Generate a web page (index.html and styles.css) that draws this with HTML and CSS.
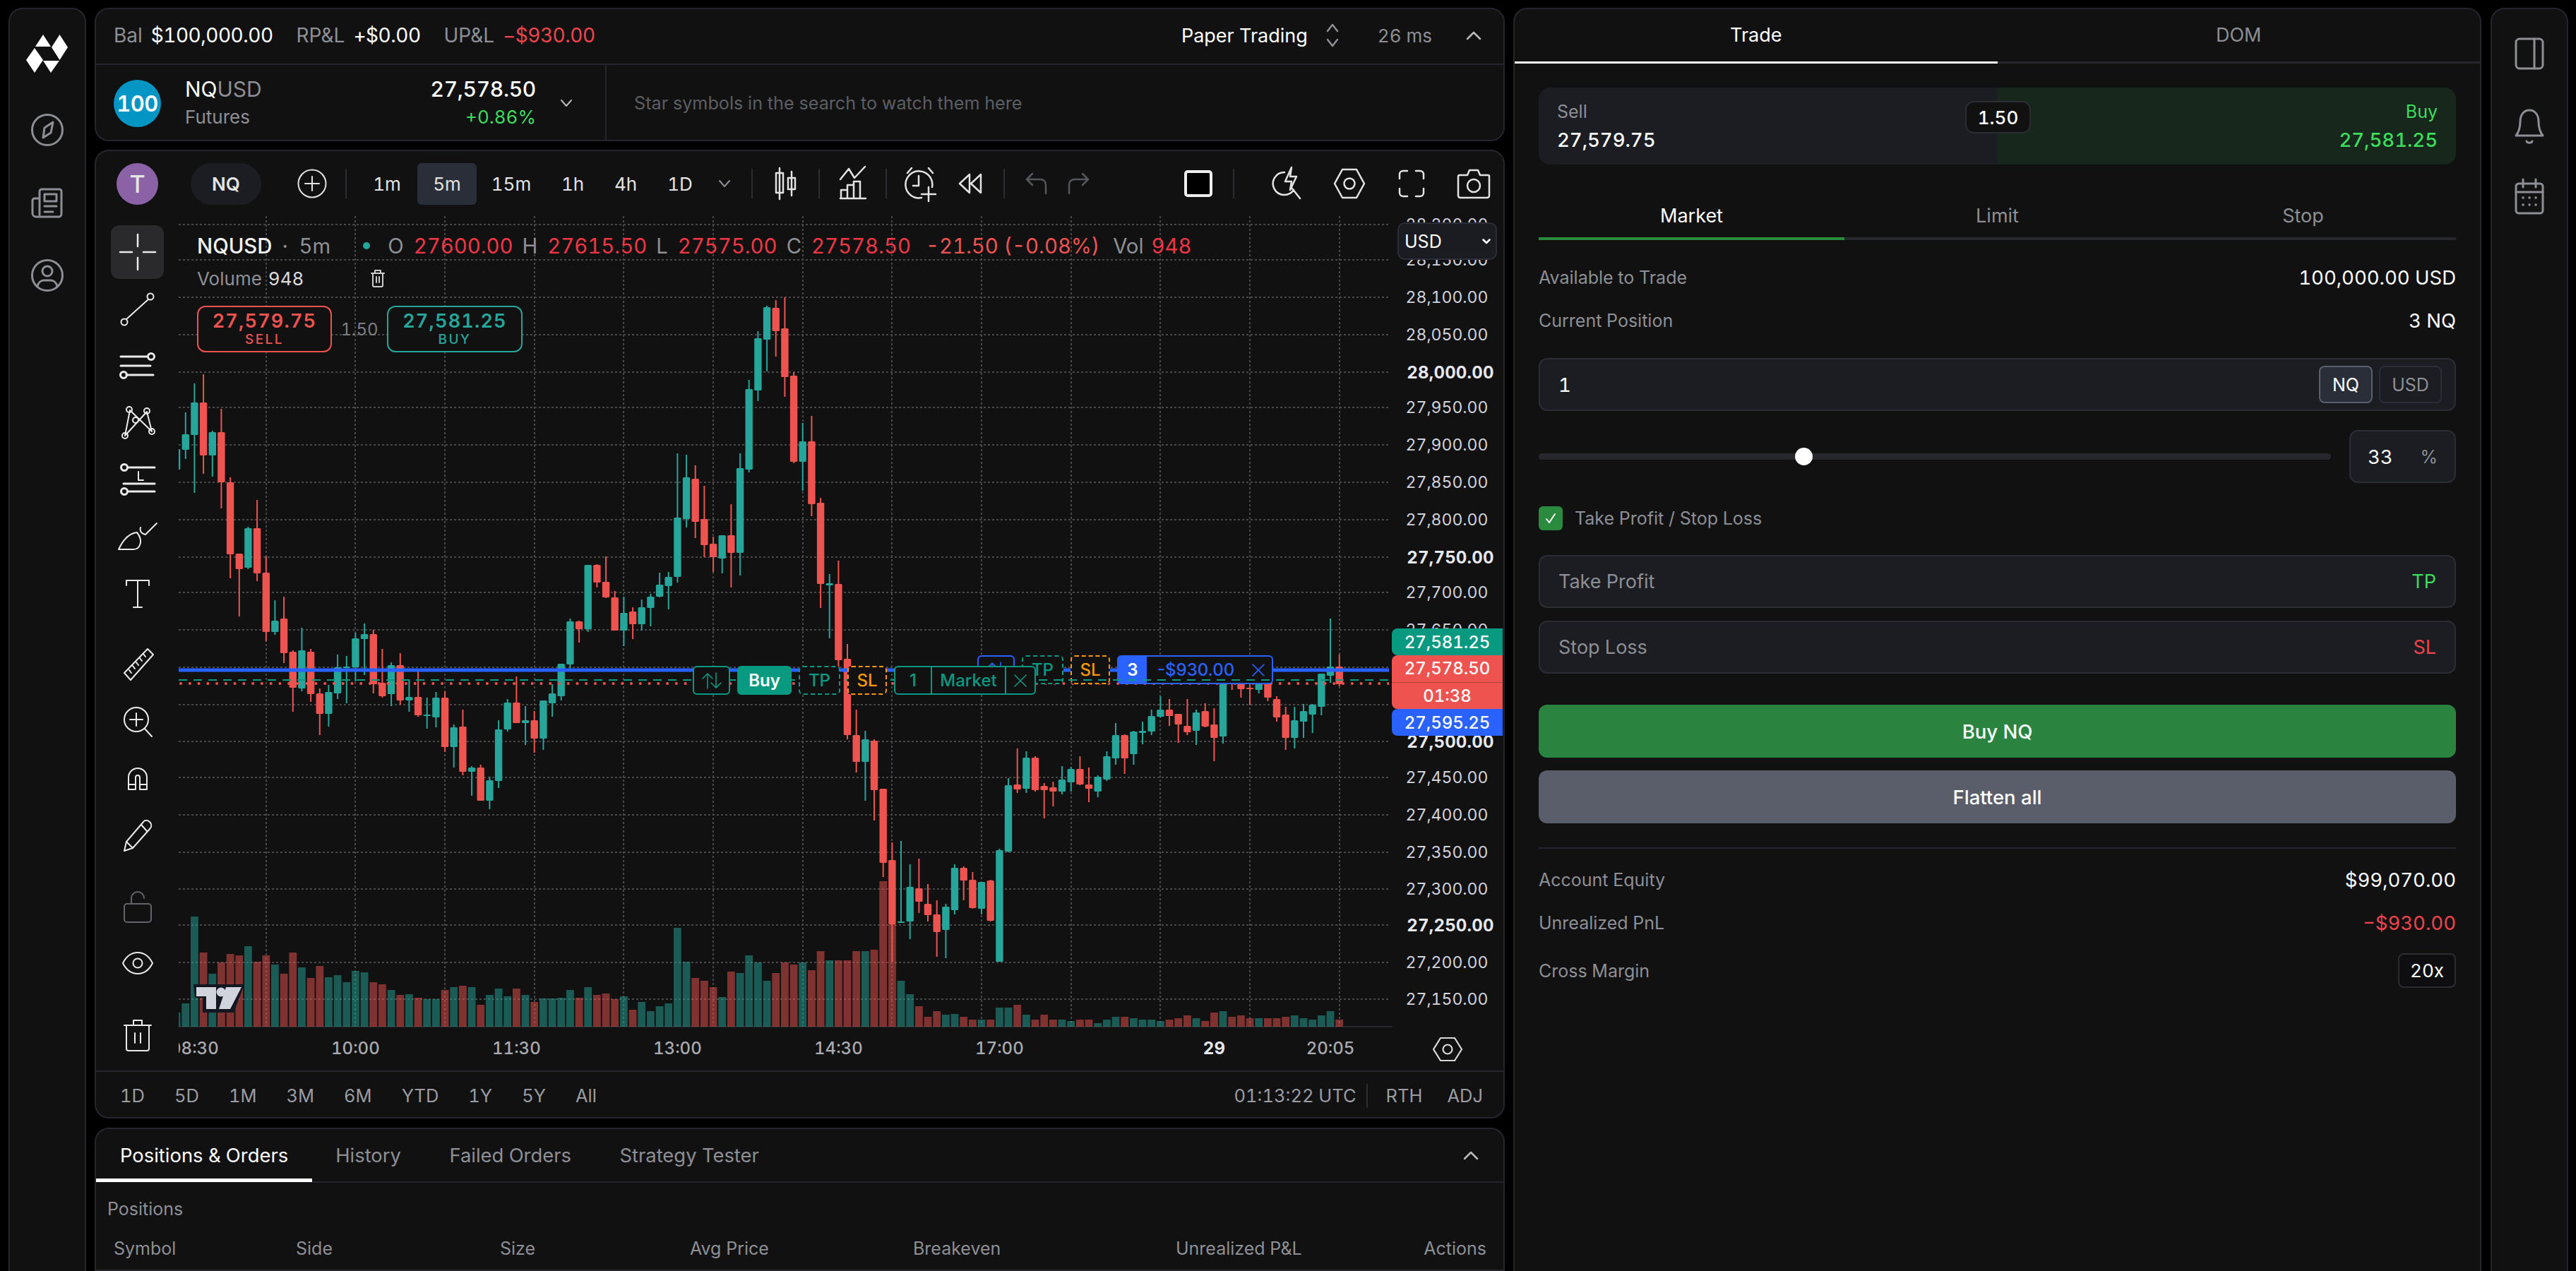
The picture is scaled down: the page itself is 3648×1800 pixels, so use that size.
FILE: index.html
```html
<!DOCTYPE html>
<html lang="en">
<head>
<meta charset="utf-8">
<title>NQUSD Paper Trading</title>
<link rel="stylesheet" href="styles.css">
</head>
<body>
<div class="app">

  <nav class="panel rail rail-left">
    <svg class="logo" viewBox="0 0 60 54" width="60" height="54"><path fill="#fff" d="M24 0 35 17H13ZM47.5 0 59 18 47.5 36 36 18ZM12 19 24 36 12 54 0 36ZM24 37H47L35 54Z"/></svg>
    <svg class="rail-icon" viewBox="0 0 56 56" width="56" height="56"><circle cx="28" cy="28" r="21.5"/><path d="M36 17 33 32 22 39 24 25Z"/></svg>
    <svg class="rail-icon" viewBox="0 0 56 56" width="56" height="56"><path d="M17 12a3 3 0 0 1 3-3h25a3 3 0 0 1 3 3v32a4 4 0 0 1-4 4H12a5 5 0 0 1-5-5V25a3 3 0 0 1 3-3h7Zm0 10v23M24 16h17v10H24ZM24 33h17M24 41h12"/></svg>
    <svg class="rail-icon" viewBox="0 0 56 56" width="56" height="56"><circle cx="28" cy="28" r="21.5"/><circle cx="28" cy="22" r="7"/><path d="M14 44c1-6 5-9 9-9h10c4 0 8 3 9 9"/></svg>
  </nav>

  <main class="center">
    <section class="panel topbar">
      <div class="stats">
        <span class="muted">Bal</span><span class="stat-val">$100,000.00</span>
        <span class="muted sep">RP&amp;L</span><span class="stat-val">+$0.00</span>
        <span class="muted sep">UP&amp;L</span><span class="stat-val red">−$930.00</span>
        <span class="stat-mode">Paper Trading</span>
        <svg class="updown" viewBox="0 0 20 38" width="20" height="38"><path d="M3 13 10 4l7 9M3 25l7 9 7-9"/></svg>
        <span class="muted ping">26 ms</span>
        <svg class="chev" viewBox="0 0 24 14" width="24" height="14"><path d="M3 12 12 3l9 9"/></svg>
      </div>
      <div class="symbols">
        <div class="sym-card">
          <span class="sym-badge">100</span>
          <div class="sym-name"><div><span class="white">NQ</span><span class="muted">USD</span></div><div class="muted small">Futures</div></div>
          <div class="sym-price"><div class="white">27,578.50</div><div class="green small">+0.86%</div></div>
          <svg class="chev-d" viewBox="0 0 18 12" width="18" height="12"><path d="M2 2l7 8 7-8"/></svg>
        </div>
        <div class="watch-hint">Star symbols in the search to watch them here</div>
      </div>
    </section>

    <section class="panel chart-panel">
      <header class="toolbar">
        <span class="avatar">T</span>
        <span class="pill">NQ</span>
        <svg class="tb-plus" viewBox="0 0 42 42" width="42" height="42"><circle cx="21" cy="21" r="19.5"/><path d="M21 11v20M11 21h20"/></svg>
        <i class="tb-div div-a"></i>
        <span class="tf tf-84">1m</span><span class="tf tf-84 tf-on">5m</span><span class="tf tf-98">15m</span><span class="tf tf-76">1h</span><span class="tf tf-74">4h</span><span class="tf tf-80">1D</span>
        <svg class="tb-chev" viewBox="0 0 18 12" width="18" height="12"><path d="M2 2l7 8 7-8"/></svg>
        <i class="tb-div"></i>
        <svg class="tb-icon" viewBox="0 0 56 56" width="56" height="56"><path d="M19 6v44M14 13h10v28H14ZM36 11v34M31 20h10v16H31Z"/></svg>
        <i class="tb-div"></i>
        <svg class="tb-icon" viewBox="0 0 56 56" width="56" height="56"><path d="M10 22 22 7l8 13L45 4M11 49V37h9v12M20 49V30h9v19M29 49V25h9v24M10 49h36"/></svg>
        <i class="tb-div"></i>
        <svg class="tb-icon tb-alarm" viewBox="0 0 56 56" width="56" height="56"><path d="M46 33A19 19 0 1 0 31 48M27 17v14h-8M11 13l6-7M41 6l6 7M41 33v20M31 43h20"/></svg>
        <svg class="tb-icon tb-rw" viewBox="0 0 56 56" width="56" height="56"><path d="M26 15 12 28l14 13ZM42 15 28 28l14 13Z"/></svg>
        <i class="tb-div"></i>
        <svg class="tb-icon dim tb-undo" viewBox="0 0 56 56" width="56" height="56"><path d="M14 22l8-8M14 22l8 8M15 22h18c5 0 8 3 8 8v12"/></svg>
        <svg class="tb-icon dim tb-redo" viewBox="0 0 56 56" width="56" height="56"><path d="M42 22l-8-8M42 22l-8 8M41 22H23c-5 0-8 3-8 8v12"/></svg>
        <span class="layout-sq"></span>
        <i class="tb-div"></i>
        <svg class="tb-icon tb-first" viewBox="0 0 56 56" width="56" height="56"><path d="M24 12a16 16 0 1 0 13 25M35 35l11 14M34 5 25 25h9l-2 12 9-19h-9Z"/></svg>
        <svg class="tb-icon wide" viewBox="0 0 56 56" width="56" height="56"><path d="M18 8h20l11 20-11 20H18L7 28Z"/><circle cx="28" cy="28" r="7.5"/></svg>
        <svg class="tb-icon wide" viewBox="0 0 56 56" width="56" height="56"><path d="M22 10h-6a5 5 0 0 0-5 5v6M34 10h6a5 5 0 0 1 5 5v6M22 46h-6a5 5 0 0 1-5-5v-6M34 46h6a5 5 0 0 0 5-5v-6"/></svg>
        <svg class="tb-icon wide" viewBox="0 0 56 56" width="56" height="56"><path d="M8 16h11l3-7h12l3 7h11a2 2 0 0 1 2 2v27a3 3 0 0 1-3 3H9a3 3 0 0 1-3-3V18a2 2 0 0 1 2-2Z"/><circle cx="28" cy="31" r="9"/></svg>
      </header>

      <div class="chart-body">
        <aside class="tools">
          <div class="tool tool-on"><svg viewBox="0 0 56 56" width="56" height="56"><path d="M28 3v17M28 36v17M3 28h17M36 28h17"/></svg></div>
          <div class="tool"><svg viewBox="0 0 56 56" width="56" height="56"><circle cx="9" cy="46" r="4.5"/><circle cx="46" cy="10" r="4.5"/><path d="M12 42 43 14"/></svg></div>
          <div class="tool"><svg class="thick" viewBox="0 0 56 56" width="56" height="56"><path d="M4 15h38M4 28h42M12 41h38"/><circle cx="47" cy="15" r="4.5"/><circle cx="8" cy="41" r="4.5"/></svg></div>
          <div class="tool"><svg viewBox="0 0 56 56" width="56" height="56"><path d="M10 46 17 10 48 40 41 12ZM10 46"/><circle cx="16" cy="9" r="4"/><circle cx="41" cy="11" r="4"/><circle cx="25" cy="24" r="4"/><circle cx="10" cy="46" r="4"/><circle cx="48" cy="40" r="4"/></svg></div>
          <div class="tool"><svg class="thick" viewBox="0 0 56 56" width="56" height="56"><path d="M14 11h38M8 34h44M14 45h38"/><circle cx="9" cy="11" r="4.5"/><circle cx="9" cy="45" r="4.5"/><path class="thin" d="M29 17v12h7"/></svg></div>
          <div class="tool"><svg viewBox="0 0 56 56" width="56" height="56"><path d="M1 46H22C32 46 36 33 27 22 17 23 8 31 1 46ZM32 15q-2 8 7 10L55 9"/></svg></div>
          <div class="tool"><svg viewBox="0 0 56 56" width="56" height="56"><path d="M12 16V9h32v7M28 9v38M22 47h12"/></svg></div>
          <div class="tool tool-gap"><svg viewBox="0 0 56 56" width="56" height="56"><path d="M42 6l8 8L18 50l-9-10ZM36 13l3 4M31 19l3 4M26 25l3 4M21 30l3 4M16 36l3 4"/></svg></div>
          <div class="tool"><svg viewBox="0 0 56 56" width="56" height="56"><circle cx="26" cy="25" r="17"/><path d="M38 38l10 11M26 16v18M17 25h18"/></svg></div>
          <div class="tool"><svg viewBox="0 0 56 56" width="56" height="56"><path d="M15 44V27a13 13 0 0 1 26 0v17H31V27a3 3 0 0 0-6 0v17ZM15 37h10M31 37h10"/></svg></div>
          <div class="tool"><svg viewBox="0 0 56 56" width="56" height="56"><path d="M9 50l3-13L36 9c2-3 6-3 9 0s3 7 0 10L21 46ZM12 37l9 9M33 13l8 9"/></svg></div>
          <div class="tool tool-gap dim"><svg viewBox="0 0 56 56" width="56" height="56"><rect x="9" y="24" width="38" height="26" rx="4"/><path d="M19 24v-8a9 9 0 0 1 18 0"/></svg></div>
          <div class="tool"><svg viewBox="0 0 56 56" width="56" height="56"><path d="M7 28c5-10 13-15 21-15s16 5 21 15c-5 10-13 15-21 15S12 38 7 28Z"/><circle cx="28" cy="28" r="6.5"/></svg></div>
          <div class="tool tool-gap"><svg viewBox="0 0 56 56" width="56" height="56"><path d="M9 15h38M22 15V8h12v7M12 15v33a3 3 0 0 0 3 3h26a3 3 0 0 0 3-3V15M24 26v14M32 26v14"/></svg></div>
        </aside>

        <div class="canvas" id="canvas">
          <svg id="chart" class="chart-svg" viewBox="253 306 1878 1210" width="1878" height="1210"></svg>

          <svg class="tv-logo" viewBox="0 0 72 40" width="72" height="40"><path d="M0 0H72L57 40H13V19H2Z" fill="#131722"/><path d="M4 4H32V35H18V17H4ZM46 4H68L52 35H36Z" fill="#d1d4dc"/><circle cx="39" cy="11" r="6.5" fill="#d1d4dc"/></svg>

          <div class="legend">
            <div class="legend-row">
              <span class="lg-sym">NQUSD</span><span class="lg-mut lg-res">·&nbsp; 5m</span><i class="lg-dot"></i>
              <span class="lg-mut lg-o">O</span><span class="lg-red">27600.00</span>
              <span class="lg-mut">H</span><span class="lg-red">27615.50</span>
              <span class="lg-mut">L</span><span class="lg-red">27575.00</span>
              <span class="lg-mut">C</span><span class="lg-red">27578.50</span>
              <span class="lg-chg">-21.50 (-0.08%)</span>
              <span class="lg-mut lg-vol">Vol</span><span class="lg-red">948</span>
            </div>
            <div class="legend-vol">
              <span class="lg-mut lg-volname">Volume</span><span class="lg-val">948</span>
              <svg class="lg-trash" viewBox="0 0 22 26" width="22" height="26"><path d="M2 6h18M7 6V2h8v4M4 6v17a2 2 0 0 0 2 2h10a2 2 0 0 0 2-2V6M9 11v8M13 11v8"/></svg>
            </div>
          </div>

          <div class="quote">
            <div class="qbox qbox-sell"><b>27,579.75</b><span>SELL</span></div>
            <span class="qspread">1.50</span>
            <div class="qbox qbox-buy"><b>27,581.25</b><span>BUY</span></div>
          </div>

          <div class="currency"><span>USD</span><svg viewBox="0 0 12 8" width="12" height="8"><path d="M1.5 1.5 6 6l4.5-4.5"/></svg></div>

          <div class="avg-line"></div>

          <div class="order-row row-pos">
            <span class="ob ob-blue ob-sm"><svg viewBox="0 0 32 26" width="32" height="26"><path d="M10 24V3M3 10l7-7 7 7M22 2v21M15 16l7 7 7-7"/></svg></span>
            <span class="ob ob-dash-t ob-tp">TP</span>
            <span class="ob ob-dash-o ob-sl">SL</span>
            <span class="pos-box"><b class="pos-qty">3</b><span class="pos-pnl">-$930.00</span><svg viewBox="0 0 22 22" width="22" height="22"><path d="M3 3l16 16M19 3 3 19"/></svg></span>
          </div>

          <div class="order-row row-new">
            <span class="ob ob-teal ob-sm"><svg viewBox="0 0 32 26" width="32" height="26"><path d="M10 24V3M3 10l7-7 7 7M22 2v21M15 16l7 7 7-7"/></svg></span>
            <span class="ob ob-fill">Buy</span>
            <span class="ob ob-dash-t ob-tp">TP</span>
            <span class="ob ob-dash-o ob-sl">SL</span>
            <span class="new-box"><span class="nb nb-q">1</span><span class="nb nb-m">Market</span><span class="nb nb-x"><svg viewBox="0 0 22 22" width="22" height="22"><path d="M3 3l16 16M19 3 3 19"/></svg></span></span>
          </div>

          <div class="price-tags">
            <div class="ptag ptag-g">27,581.25</div>
            <div class="ptag ptag-r"><span>27,578.50</span><span class="ptag-cd">01:38</span></div>
            <div class="ptag ptag-b">27,595.25</div>
          </div>
        </div>
      </div>

      <footer class="range">
        <span>1D</span><span>5D</span><span>1M</span><span>3M</span><span>6M</span><span>YTD</span><span>1Y</span><span>5Y</span><span>All</span>
        <span class="range-time">01:13:22 UTC</span><i class="range-div"></i><span>RTH</span><span class="range-adj">ADJ</span>
      </footer>
    </section>

    <section class="panel bottom">
      <div class="b-tabs">
        <span class="b-tab b-tab-on">Positions &amp; Orders</span>
        <span class="b-tab">History</span>
        <span class="b-tab">Failed Orders</span>
        <span class="b-tab">Strategy Tester</span>
        <svg class="chev b-chev" viewBox="0 0 24 14" width="24" height="14"><path d="M3 12 12 3l9 9"/></svg>
      </div>
      <div class="b-title">Positions</div>
      <div class="b-head"><span>Symbol</span><span>Side</span><span>Size</span><span>Avg Price</span><span>Breakeven</span><span>Unrealized P&amp;L</span><span>Actions</span></div>
    </section>
  </main>

  <aside class="panel trade">
    <div class="t-tabs"><span class="t-tab t-tab-on">Trade</span><span class="t-tab">DOM</span></div>
    <div class="t-body">
      <div class="spread">
        <div class="spread-side spread-sell"><span class="muted">Sell</span><span class="white spread-px">27,579.75</span></div>
        <div class="spread-side spread-buy"><span class="green">Buy</span><span class="green spread-px">27,581.25</span></div>
        <span class="spread-chip">1.50</span>
      </div>
      <div class="o-tabs"><span class="o-tab o-tab-on">Market</span><span class="o-tab">Limit</span><span class="o-tab">Stop</span></div>
      <div class="kv kv-first"><span class="muted">Available to Trade</span><span class="white v">100,000.00 USD</span></div>
      <div class="kv kv-second"><span class="muted">Current Position</span><span class="white v">3 NQ</span></div>
      <div class="field qty"><span class="white v">1</span><span class="unit unit-on">NQ</span><span class="unit">USD</span></div>
      <div class="slide-row">
        <div class="slider"><i class="thumb"></i></div>
        <div class="pct"><span class="white v">33</span><span class="muted">%</span></div>
      </div>
      <label class="check"><span class="box"><svg viewBox="0 0 20 20" width="20" height="20"><path d="M4 11l4 5 8-12"/></svg></span><span class="muted">Take Profit / Stop Loss</span></label>
      <div class="field tp"><span class="muted">Take Profit</span><span class="green">TP</span></div>
      <div class="field sl"><span class="muted">Stop Loss</span><span class="red">SL</span></div>
      <div class="btn btn-buy">Buy NQ</div>
      <div class="btn btn-flat">Flatten all</div>
      <div class="hr"></div>
      <div class="kv kv-eq"><span class="muted">Account Equity</span><span class="white v">$99,070.00</span></div>
      <div class="kv kv-pnl"><span class="muted">Unrealized PnL</span><span class="red v">−$930.00</span></div>
      <div class="kv kv-mg"><span class="muted">Cross Margin</span><span class="lev">20x</span></div>
    </div>
  </aside>

  <nav class="panel rail rail-right">
    <svg class="rail-icon" viewBox="0 0 56 56" width="56" height="56"><rect x="9" y="7" width="38" height="42" rx="5"/><path d="M35 7v42"/></svg>
    <svg class="rail-icon" viewBox="0 0 56 56" width="56" height="56"><path d="M28 6c-8 0-13 7-13 16 0 10-2 15-6 20h38c-4-5-6-10-6-20 0-9-5-16-13-16ZM24 50c1 3 7 3 8 0"/></svg>
    <svg class="rail-icon" viewBox="0 0 56 56" width="56" height="56"><rect x="9" y="8" width="38" height="42" rx="4"/><path d="M9 20h38M19 2v11M37 2v11"/><path class="dots" d="M19 28h.1M28 28h.1M37 28h.1M19 38h.1M28 38h.1M37 38h.1"/></svg>
  </nav>
</div>
<script src="chart.js"></script>
</body>
</html>
```

FILE: styles.css
```css
* { box-sizing: border-box; }
html, body { margin: 0; height: 100%; background: #000; overflow: hidden; }
body { font-family: Inter, "Liberation Sans", sans-serif; font-size: 26px; color: #fff; font-variant-numeric: tabular-nums; }
svg { display: block; fill: none; stroke: currentColor; stroke-linecap: round; stroke-linejoin: round; }
i { display: block; }

.muted { color: #8d8f94; }
.white { color: #fff; }
.green { color: #3ddc5c; }
.red { color: #f0444c; }
.small { font-size: 26px; }

.app { display: flex; align-items: flex-start; gap: 12px; height: 1800px; padding: 11px 0 0 12px; overflow: hidden; }
.panel { background: #111112; border: 2px solid #24262c; border-radius: 20px; }

.rail { flex: none; width: 110px; height: 1840px; display: flex; flex-direction: column; align-items: center; color: #8d8f94; }
.rail-icon { stroke-width: 3; }
.rail-left { padding-top: 36px; gap: 47px; }
.rail-left .logo { fill: #fff; stroke: none; margin-bottom: 6px; }
.rail-right { padding-top: 35px; gap: 46px; margin-left: 1px; }
.dots { stroke-width: 3.5; }

.center { flex: none; width: 1997px; display: flex; flex-direction: column; gap: 12px; height: 1840px; }

/* top bar */
.topbar { height: 189px; flex: none; }
.stats { box-sizing: content-box; height: 74px; display: flex; align-items: center; padding: 0 30px 3px 25px; font-size: 28px; border-bottom: 2px solid #24262c; }
.stat-val { margin-left: 12px; letter-spacing: -.5px; }
.sep { margin-left: 33px; }
.stat-mode { margin-left: auto; font-size: 27px; }
.updown { margin-left: 25px; color: #8d8f94; stroke-width: 2.5; }
.ping { margin-left: 54px; font-size: 26px; }
.chev { margin-left: 47px; color: #bbb; stroke-width: 2.5; }
.symbols { display: flex; height: 108px; }
.sym-card { width: 723px; display: flex; align-items: center; padding-left: 25px; border-right: 2px solid #24262c; }
.sym-badge { width: 67px; height: 67px; border-radius: 50%; background: #0396c4; display: flex; align-items: center; justify-content: center; font-size: 31px; font-weight: 600; letter-spacing: -.5px; }
.sym-name { margin-left: 34px; font-size: 30px; line-height: 40px; }
.sym-price { margin-left: auto; text-align: right; font-size: 30px; line-height: 40px; font-weight: 500; letter-spacing: -.3px; }
.sym-price .small { font-weight: 400; letter-spacing: 0; }
.sym-name .small { line-height: 40px; }
.chev-d { margin: 0 46px 0 34px; color: #bbb; stroke-width: 2; }
.watch-hint { margin-left: 39px; align-self: center; color: #5c5e62; font-size: 25.2px; }

/* chart panel */
.chart-panel { height: 1372px; flex: none; display: flex; flex-direction: column; overflow: hidden; margin-bottom: 1px; }
.toolbar { height: 92px; flex: none; display: flex; align-items: center; padding: 0 14px 0 29px; color: #e3e3e3; }
.avatar { width: 59px; height: 59px; border-radius: 50%; background: #8b62a5; display: flex; align-items: center; justify-content: center; font-size: 34px; font-weight: 500; }
.pill { margin-left: 46px; width: 100px; height: 59px; border-radius: 30px; background: #1c1d22; display: flex; align-items: center; justify-content: center; font-size: 26px; font-weight: 600; }
.tb-plus { margin-left: 51px; stroke-width: 2; }
.tb-div { flex: none; width: 2px; height: 42px; background: #2b2d33; }
.div-a { margin: 0 15px 0 26px; }
.tf { flex: none; height: 59px; display: flex; align-items: center; justify-content: center; font-size: 26px; border-radius: 6px; }
.tf-84 { width: 84px; }
.tf-98 { width: 98px; }
.tf-76 { width: 76px; }
.tf-74 { width: 74px; }
.tf-80 { width: 80px; }
.tf-on { background: #2a2e39; margin-left: 1px; }
.tb-chev { margin: 0 29px 0 14px; color: #8d8f94; stroke-width: 2; flex: none; }
.tb-icon { margin: 0 18.5px; stroke-width: 2.5; flex: none; }
.tb-alarm { margin: 0 17px 0 18px; }
.tb-rw { margin: 0 18px 0 0; }
.tb-icon.dim { color: #55575c; }
.tb-undo { margin: 0 0 0 17px; }
.tb-redo { margin: 0 0 0 3px; }
.tb-first { margin: 0 0 0 47px; }
.tb-icon.wide { margin: 0 0 0 32px; }
.layout-sq { flex: none; margin: 0 29px 0 auto; width: 40px; height: 38px; background: #000; border: 4px solid #eee; border-radius: 5px; }

.chart-body { flex: 1; display: flex; min-height: 0; }
.tools { width: 117px; flex: none; display: flex; flex-direction: column; align-items: center; padding-top: 13px; gap: 4.6px; color: #eaeaea; }
.tool { width: 75px; height: 76px; flex: none; display: flex; align-items: center; justify-content: center; border-radius: 12px; }
.tool svg { stroke-width: 2; }
.tool svg.thick { stroke-width: 3; }
.tool svg .thin { stroke-width: 2; }
.tool-on { background: #2a2a2c; }
.tool-on svg { stroke-width: 2.5; }
.tool-gap { margin-top: 20px; }
.dim { color: #62646a; }

.canvas { position: relative; flex: 1; min-width: 0; overflow: hidden; }
.chart-svg { stroke: none; }
.grid-line { stroke: #48484a; stroke-width: 2; stroke-linecap: butt; stroke-dasharray: 3 3; }
.axis-line { stroke: #28292c; stroke-width: 2; }
.wick { stroke-width: 2; stroke-linecap: butt; }
.axis { font-family: Inter, "Liberation Sans", sans-serif; font-size: 23px; font-variant-numeric: tabular-nums; fill: #d1d4dc; stroke: none; text-anchor: middle; dominant-baseline: central; }
.axis-time { font-size: 24px; fill: #a9abb0; font-weight: 500; }
.axis-strong { font-size: 24px; font-weight: 700; fill: #e6e8ee; letter-spacing: .2px; }
.hex { stroke: #d8d8d8; stroke-width: 2.2; }
.line-pos { stroke: #2962ff; stroke-width: 5; }
.line-px { stroke: #ef5350; stroke-width: 4; stroke-linecap: round; stroke-dasharray: .1 12.66; }

.tv-logo { position: absolute; left: 21px; top: 1088px; stroke: none; }

.legend { position: absolute; left: 26px; top: 21px; }
.legend-row { display: flex; align-items: center; height: 42px; font-size: 29.3px; white-space: nowrap; }
.lg-sym { font-weight: 500; color: #f3f3f3; }
.lg-mut { color: #8f9094; margin-right: 14px; }
.lg-res { margin-left: 14px; margin-right: 0; }
.lg-volname { margin-right: 9px; }
.lg-dot { width: 10px; height: 10px; border-radius: 50%; background: #26a69a; margin-left: 46px; }
.lg-o { margin-left: 25px; }
.lg-red { color: #f23645; margin-right: 13px; }
.lg-chg { color: #ef5350; margin-left: 8px; margin-right: 19px; }
.lg-vol { margin-right: 11px; }
.legend-vol { display: flex; align-items: center; height: 42px; margin-top: 4px; font-size: 26px; }
.lg-val { color: #dcdcdc; }
.lg-trash { margin-left: 94px; color: #ccc; stroke-width: 2; }

.quote { position: absolute; left: 26px; top: 127px; display: flex; align-items: center; }
.qbox { height: 66px; border: 2px solid; border-radius: 12px; display: flex; flex-direction: column; align-items: center; justify-content: center; background: #111112; }
.qbox b { font-size: 27px; font-weight: 600; line-height: 30px; letter-spacing: 1.2px; }
.qbox span { font-size: 19px; font-weight: 500; line-height: 22px; letter-spacing: 2.4px; }
.qbox-sell { width: 191px; color: #ef5350; }
.qbox-buy { width: 192px; color: #26a69a; }
.qspread { width: 78px; text-align: center; color: #7c7e82; font-size: 24px; }

.currency { position: absolute; left: 1726px; top: 9px; width: 141px; height: 53px; background: #1a1c22; border: 2px solid #2b2e36; border-radius: 10px; display: flex; align-items: center; justify-content: space-between; padding: 0 7px 0 8px; font-size: 25px; z-index: 1; }
.currency svg { stroke-width: 2.5; }

.avg-line { position: absolute; left: 0; top: 656px; width: 1714px; height: 2px; background: repeating-linear-gradient(90deg, #089981 0 12px, transparent 12px 21px); z-index: 2; }

.order-row { position: absolute; display: flex; height: 41px; font-size: 24px; font-weight: 500; font-variant-numeric: normal; }
.row-pos { left: 1131px; top: 622px; gap: 10px; z-index: 1; }
.row-new { left: 728px; top: 637px; gap: 10px; z-index: 3; }
.ob { display: flex; align-items: center; justify-content: center; border-radius: 6px; background: #111112; }
.ob-sm { width: 53px; border: 2px solid; }
.ob-sm svg { stroke-width: 1.6; }
.ob-blue { color: #2962ff; }
.ob-teal { color: #089981; }
.ob-fill { width: 77px; background: #089981; color: #fff; font-weight: 600; }
.ob-tp { width: 59px; }
.ob-sl { width: 56px; }
.ob-dash-t { border: 2px dashed #089981; color: #089981; }
.ob-dash-o { border: 2px dashed #ff9800; color: #ff9800; }
.pos-box { width: 221px; display: flex; align-items: center; border: 2px solid #2962ff; border-radius: 6px; background: #111112; color: #2962ff; }
.pos-qty { width: 40px; align-self: stretch; flex: none; display: flex; align-items: center; justify-content: center; background: #2962ff; color: #fff; font-weight: 600; }
.pos-pnl { margin-left: 15px; }
.pos-box svg { margin-left: auto; margin-right: 8px; stroke-width: 1.6; }
.new-box { width: 201px; display: flex; border: 2px solid #089981; border-radius: 6px; background: #111112; color: #089981; }
.nb { display: flex; align-items: center; justify-content: center; border-left: 2px solid #089981; }
.nb-q { width: 50px; border-left: 0; }
.nb-m { width: 105px; }
.nb-x { flex: 1; }
.nb-x svg { stroke-width: 1.6; }

.price-tags { position: absolute; left: 1718px; top: 584px; width: 157px; z-index: 4; font-size: 24px; font-weight: 500; }
.ptag { display: flex; align-items: center; justify-content: center; border-radius: 8px 0 0 8px; color: #fff; }
.ptag-g { height: 38px; background: #089981; }
.ptag-r { height: 76px; background: #ef5350; flex-direction: column; }
.ptag-r span { height: 38px; line-height: 38px; width: 100%; text-align: center; }
.ptag-cd { border-top: 1px solid #b3403e; }
.ptag-b { height: 38px; background: #2962ff; }

.range { height: 66px; flex: none; display: flex; align-items: center; border-top: 2px solid #24262c; padding: 3px 29px 0 34px; gap: 42px; color: #9a9ca1; font-size: 25.5px; }
.range-time { margin-left: auto; margin-right: -28px; }
.range-div { width: 2px; height: 34px; background: #2b2d33; margin-right: -16px; }
.range-adj { margin-left: -7px; }

/* positions */
.bottom { flex: 1; }
.b-tabs { height: 76px; display: flex; align-items: center; border-bottom: 2px solid #24262c; font-size: 27.4px; color: #8d8f94; }
.b-tab { height: 76px; display: flex; align-items: center; padding: 0 34px; }
.b-tab + .b-tab { padding: 0 0; margin-left: 68.5px; }
.b-tab-on { color: #fff; border-bottom: 5px solid #fff; padding-top: 5px; }
.b-tab-on + .b-tab { margin-left: 33px; }
.b-chev { margin-left: auto; margin-right: 34px; }
.b-title { padding: 21px 0 0 16px; line-height: 32px; color: #8d8f94; font-size: 25px; }
.b-head { display: grid; grid-template-columns: 258px 289px 269px 316px 372px 1fr auto; height: 62px; align-items: center; padding: 0 24px 0 25px; color: #8d8f94; font-size: 25px; margin-top: 10px; border-bottom: 2px solid #24262c; }

/* trade panel */
.trade { flex: none; width: 1371px; height: 1840px; margin-left: 0; }
.t-tabs { display: flex; height: 77px; font-size: 27px; color: #8d8f94; }
.t-tab { flex: 1; display: flex; align-items: center; justify-content: center; border-bottom: 3px solid #24262c; padding-bottom: 2px; }
.t-tab-on { color: #fff; border-bottom-color: #fff; }
.t-body { padding: 34px 34px 0; display: flex; flex-direction: column; }
.spread { position: relative; display: flex; height: 109px; border-radius: 16px; overflow: hidden; flex: none; }
.spread-side { flex: 1; display: flex; flex-direction: column; justify-content: center; padding: 0 26px; gap: 8px; font-size: 25px; }
.spread-sell { background: #1b1d22; }
.spread-buy { background: #17271c; align-items: flex-end; }
.spread-px { font-size: 27.5px; font-weight: 500; }
.spread-chip { position: absolute; left: 604px; top: 19px; width: 93px; height: 46px; display: flex; align-items: center; justify-content: center; background: #111112; border: 2px solid #2b2d33; border-radius: 12px; font-size: 26px; font-weight: 500; }
.o-tabs { display: flex; margin-top: 49px; height: 58px; border-bottom: 4px solid #26282e; font-size: 27px; color: #8d8f94; }
.o-tab { flex: 1; display: flex; align-items: center; justify-content: center; margin-bottom: -4px; border-bottom: 4px solid transparent; padding-bottom: 7px; }
.o-tab-on { color: #fff; border-bottom-color: #2a8a3e; }
.kv { display: flex; justify-content: space-between; align-items: center; flex: none; font-size: 25px; line-height: 34px; }
.v { font-size: 27.5px; }
.kv-first { margin-top: 36px; }
.kv-second { margin-top: 27px; }
.field { flex: none; display: flex; align-items: center; justify-content: space-between; background: #1b1d22; border: 2px solid #2a2d33; border-radius: 12px; height: 75px; padding: 0 26px; }
.qty { margin-top: 36px; padding-right: 18px; gap: 9px; }
.qty .v { margin-right: auto; }
.unit { width: 76px; height: 53px; display: flex; align-items: center; justify-content: center; border: 2px solid #2a2d33; border-radius: 8px; font-size: 25px; color: #8d8f94; }
.unit + .unit { width: 89px; }
.unit-on { background: #2a2e39; border-color: #5b5f6b; color: #fff; }
.slide-row { display: flex; align-items: center; gap: 26px; margin-top: 27px; flex: none; }
.slider { position: relative; flex: 1; height: 9px; background: #26282e; border-radius: 5px; }
.thumb { position: absolute; left: 363px; top: -8px; width: 25px; height: 25px; border-radius: 50%; background: #fff; }
.pct { width: 151px; height: 75px; display: flex; align-items: center; justify-content: space-between; background: #1b1d22; border: 2px solid #2a2d33; border-radius: 12px; padding: 0 24px; font-size: 25px; }
.check { display: flex; align-items: center; gap: 17px; margin-top: 33px; flex: none; font-size: 25px; }
.box { width: 34px; height: 34px; border-radius: 6px; background: #2a8a3e; display: flex; align-items: center; justify-content: center; }
.box svg { stroke-width: 2; }
.tp { margin-top: 35px; font-size: 27px; }
.sl { margin-top: 18px; font-size: 27px; }
.btn { flex: none; height: 75px; border-radius: 12px; display: flex; align-items: center; justify-content: center; font-size: 27.5px; font-weight: 500; }
.btn-buy { margin-top: 44px; background: #2a843f; }
.btn-flat { margin-top: 18px; background: #5a5e6b; }
.hr { flex: none; height: 2px; background: #24262c; margin-top: 34px; }
.kv-eq { margin-top: 27px; }
.kv-pnl { margin-top: 27px; }
.kv-mg { margin-top: 26px; }
.lev { width: 82px; height: 49px; display: flex; align-items: center; justify-content: center; background: #0e0e10; border: 2px solid #2b2d33; border-radius: 8px; font-size: 26px; }
```

FILE: chart.js
```js
// hi, bodyTop, bodyBottom, lo, rising(1)/falling(0), volume height
var bars = [
[636,636,665,665,1,20],[584,615,637,650,1,33],[543,570,616,698,1,156],[530,570,645,671,0,105],[610,612,645,675,1,75],
[579,612,683,720,0,91],[676,683,785,819,0,103],[784,784,806,873,0,101],[746,748,804,806,1,114],[708,748,812,823,0,92],
[788,811,895,908,0,101],[850,879,895,899,1,88],[845,876,925,939,0,75],[921,923,974,1008,0,105],[889,921,975,979,1,84],
[919,923,983,994,0,69],[975,982,1011,1041,0,86],[970,980,1011,1029,1,70],[927,945,982,990,1,73],[929,944,946,996,1,63],
[896,904,945,965,1,79],[883,898,905,956,1,77],[892,898,969,982,0,63],[919,967,986,988,0,60],[938,942,983,1000,1,52],
[925,942,992,998,0,45],[962,987,992,1008,1,46],[951,987,1013,1015,0,41],[988,1012,1014,1032,1,39],[980,988,1016,1030,1,39],
[979,988,1058,1065,0,52],[1026,1030,1058,1087,1,56],[1005,1029,1093,1098,0,58],[1085,1087,1093,1127,1,56],[1083,1087,1134,1134,0,31],
[1100,1105,1134,1146,1,45],[1020,1033,1106,1116,1,54],[990,995,1033,1036,1,43],[958,995,1024,1024,0,54],[1000,1020,1024,1055,1,45],
[1007,1020,1046,1066,0,35],[992,992,1046,1062,1,40],[969,982,996,1015,1,40],[940,940,986,992,1,41],[876,880,941,947,1,52],
[879,880,891,910,0,41],[800,800,891,895,1,56],[799,800,825,832,0,45],[788,824,846,847,0,47],[837,846,893,893,0,39],
[845,868,893,915,1,43],[860,866,884,905,0,24],[849,860,884,893,1,35],[841,845,861,887,1,22],[811,828,845,846,1,29],
[810,817,830,863,1,33],[642,733,817,825,1,140],[644,676,735,747,1,92],[659,678,739,762,0,69],[688,735,772,789,0,65],
[760,770,789,810,0,56],[758,758,791,812,1,42],[714,758,783,832,0,78],[642,663,783,815,1,76],[538,551,665,669,1,101],
[469,479,553,568,1,91],[433,435,481,526,1,65],[425,436,469,505,0,76],[421,465,534,562,0,91],[527,532,654,656,0,88],
[599,625,654,695,1,91],[589,625,714,731,0,80],[705,712,827,861,0,107],[813,826,829,904,1,94],[794,827,935,946,0,94],
[912,933,1041,1047,0,94],[1005,1041,1079,1094,0,107],[1035,1047,1079,1134,1,107],[1047,1049,1119,1162,0,109],[1117,1117,1222,1242,0,206],
[1193,1218,1309,1362,0,145],[1191,1305,1307,1307,1,65],[1224,1256,1305,1330,1,46],[1216,1258,1277,1293,0,29],[1252,1280,1296,1305,0,14],
[1275,1295,1320,1355,0,22],[1280,1284,1317,1357,1,17],[1224,1229,1289,1295,1,18],[1227,1229,1247,1275,0,14],[1235,1246,1286,1287,0,10],
[1249,1249,1287,1295,1,10],[1246,1247,1304,1305,0,10],[1202,1204,1362,1362,1,27],[1102,1112,1206,1207,1,27],[1060,1111,1118,1123,0,31],
[1064,1073,1117,1123,1,17],[1071,1073,1119,1121,0,10],[1109,1113,1119,1159,0,17],[1107,1115,1121,1142,0,10],[1085,1104,1121,1125,1,10],
[1086,1089,1108,1121,1,8],[1071,1089,1111,1112,0,10],[1087,1111,1117,1136,0,10],[1098,1100,1121,1129,1,5],[1064,1071,1104,1106,1,10],
[1024,1041,1074,1083,1,14],[1040,1041,1074,1096,0,14],[1035,1036,1068,1083,1,12],[1022,1035,1038,1054,1,10],[1005,1014,1036,1041,1,10],
[986,1005,1015,1016,1,8],[990,1005,1014,1028,0,10],[1011,1011,1026,1052,0,12],[990,1028,1037,1041,0,16],[1005,1009,1035,1055,1,12],
[996,1007,1029,1030,0,8],[1003,1026,1045,1078,0,20],[935,940,1043,1053,1,22],[935,940,960,977,0,14],[945,960,976,988,0,16],
[950,974,975,998,0,12],[945,960,977,982,1,12],[940,950,988,993,0,12],[986,990,1016,1022,0,12],[1001,1012,1045,1062,0,14],
[1001,1020,1045,1060,1,16],[997,1007,1022,1045,1,12],[997,998,1012,1038,1,10],[954,954,1001,1013,1,16],[876,944,957,967,1,22],
[927,944,969,972,0,10]
];
var GRID_Y = [318,368,421,474,527,577,630,683,736,789,839,892,945,998,1050,1101,1154,1207,1259,1310,1363,1415];
var PRICES = ['28,200.00','28,150.00','28,100.00','28,050.00','28,000.00','27,950.00','27,900.00','27,850.00','27,800.00','27,750.00','27,700.00','27,650.00','27,600.00','27,550.00','27,500.00','27,450.00','27,400.00','27,350.00','27,300.00','27,250.00','27,200.00','27,150.00'];
var TIMES = [[2,'08:30'],[20,'10:00'],[38,'11:30'],[56,'13:00'],[74,'14:30'],[92,'17:00'],[116,'29',1],[129,'20:05']];
var L = 253, R = 1967, T = 306, B = 1454, STEP = 12.666, X0 = 250.1;
var up = '#26a69a', down = '#ef5350';
function xAt(i) { return X0 + i * STEP; }
var o = [];
o.push('<defs><clipPath id="plot"><rect x="'+L+'" y="'+T+'" width="'+(R-L)+'" height="'+(B-T)+'"/></clipPath>');
o.push('<clipPath id="times"><rect x="'+L+'" y="'+B+'" width="1878" height="62"/></clipPath></defs>');
GRID_Y.forEach(function (y) {
  o.push('<line class="grid-line" x1="'+L+'" x2="'+R+'" y1="'+y+'" y2="'+y+'"/>');
});
for (var i = 0; i <= 130; i += 10) {
  var gx = Math.round(xAt(i));
  if (gx > L) o.push('<line class="grid-line" x1="'+gx+'" x2="'+gx+'" y1="'+T+'" y2="'+B+'"/>');
}
o.push('<line class="axis-line" x1="'+L+'" x2="'+(R+4)+'" y1="'+B+'" y2="'+B+'"/>');
o.push('<g clip-path="url(#plot)">');
bars.forEach(function (b, k) {
  var x = xAt(k), c = b[4] ? up : down;
  o.push('<rect x="'+(x-5.4).toFixed(1)+'" y="'+(B-b[5])+'" width="10.8" height="'+b[5]+'" fill="'+c+'" opacity=".5"/>');
});
bars.forEach(function (b, k) {
  var x = xAt(k), c = b[4] ? up : down;
  o.push('<line class="wick" x1="'+x.toFixed(1)+'" x2="'+x.toFixed(1)+'" y1="'+b[0]+'" y2="'+b[3]+'" stroke="'+c+'"/>');
  o.push('<rect x="'+(x-5.2).toFixed(1)+'" y="'+b[1]+'" width="10.4" height="'+Math.max(b[2]-b[1],2)+'" rx="1.5" fill="'+c+'"/>');
});
o.push('<line class="line-pos" x1="'+L+'" x2="'+(R+4)+'" y1="949" y2="949"/>');
o.push('<line class="line-px" x1="'+(L+3)+'" x2="'+R+'" y1="968" y2="968"/>');
o.push('</g>');
PRICES.forEach(function (p, k) {
  var strong = (k === 4 || k === 9 || k === 14 || k === 19);
  var x = strong ? 2054 : 2049;
  o.push('<text class="axis'+(strong?' axis-strong':'')+'" x="'+x+'" y="'+GRID_Y[k]+'">'+p+'</text>');
});
o.push('<g clip-path="url(#times)">');
TIMES.forEach(function (t) {
  o.push('<text class="axis axis-time'+(t[2]?' axis-strong':'')+'" x="'+xAt(t[0]).toFixed(1)+'" y="1484">'+t[1]+'</text>');
});
o.push('</g>');
o.push('<path class="hex" d="M2040 1470h20l10 16-10 16h-20l-10-16Z"/><circle class="hex" cx="2050" cy="1486" r="6.5"/>');
document.getElementById('chart').innerHTML = o.join('');
```
